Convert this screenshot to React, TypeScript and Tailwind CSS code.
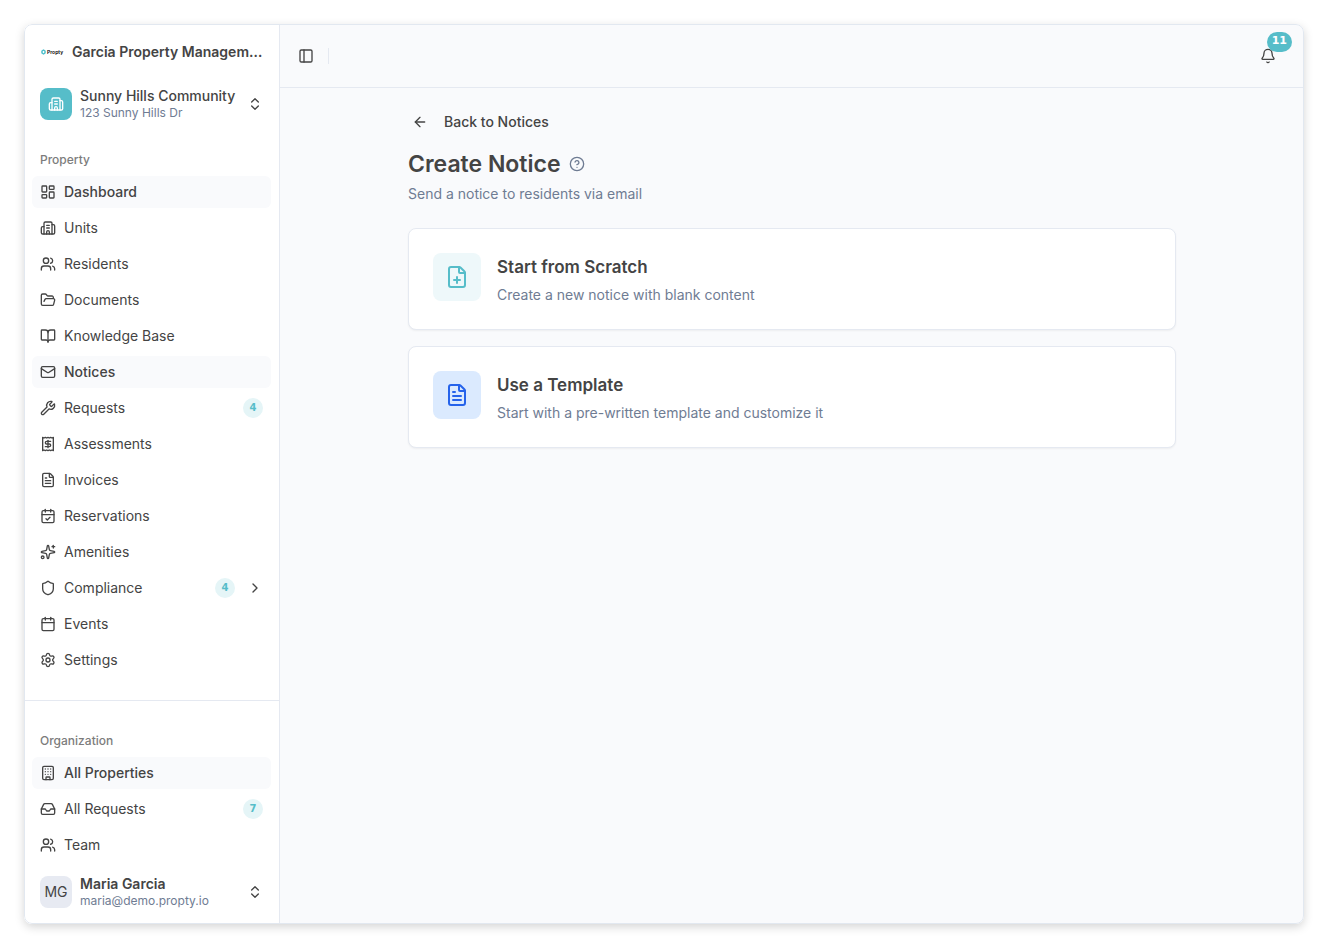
import type { ReactNode } from "react";
import {
  ArrowLeft,
  Bell,
  BookOpen,
  Building,
  Calendar,
  CalendarCheck,
  ChevronRight,
  ChevronsUpDown,
  CircleHelp,
  FilePlus,
  FileText,
  FolderOpen,
  Inbox,
  LayoutDashboard,
  Mail,
  PanelLeft,
  Settings,
  Shield,
  Sparkles,
  Users,
  Wrench,
} from "lucide-react";
import type { LucideIcon } from "lucide-react";
import clsx from "clsx";

type NavItem = {
  label: string;
  icon: LucideIcon | typeof UnitsIcon;
  active?: boolean;
  badge?: number;
  expandable?: boolean;
};

const UnitsIcon = ({ className }: { className?: string }) => (
  <svg
    className={className}
    viewBox="0 0 24 24"
    fill="none"
    stroke="currentColor"
    strokeWidth="2"
    strokeLinecap="round"
    strokeLinejoin="round"
  >
    <path d="M10 12h4" />
    <path d="M10 8h4" />
    <path d="M14 21v-3a2 2 0 0 0-4 0v3" />
    <path d="M6 10H4a2 2 0 0 0-2 2v7a2 2 0 0 0 2 2h16a2 2 0 0 0 2-2V9a2 2 0 0 0-2-2h-2" />
    <path d="M6 21V5a2 2 0 0 1 2-2h8a2 2 0 0 1 2 2v16" />
  </svg>
);

const AssessmentsIcon = ({ className }: { className?: string }) => (
  <svg
    className={className}
    viewBox="0 0 24 24"
    fill="none"
    stroke="currentColor"
    strokeWidth="2"
    strokeLinecap="round"
    strokeLinejoin="round"
  >
    <path d="M4 2v20l2-1 2 1 2-1 2 1 2-1 2 1 2-1 2 1V2l-2 1-2-1-2 1-2-1-2 1-2-1-2 1Z" />
    <path d="M16 8h-6a2 2 0 1 0 0 4h4a2 2 0 1 1 0 4H8" />
    <path d="M12 17.5v-11" />
  </svg>
);

const propertyItems: NavItem[] = [
  { label: "Dashboard", icon: LayoutDashboard, active: true },
  { label: "Units", icon: UnitsIcon },
  { label: "Residents", icon: Users },
  { label: "Documents", icon: FolderOpen },
  { label: "Knowledge Base", icon: BookOpen },
  { label: "Notices", icon: Mail, active: true },
  { label: "Requests", icon: Wrench, badge: 4 },
  { label: "Assessments", icon: AssessmentsIcon },
  { label: "Invoices", icon: FileText },
  { label: "Reservations", icon: CalendarCheck },
  { label: "Amenities", icon: Sparkles },
  { label: "Compliance", icon: Shield, badge: 4, expandable: true },
  { label: "Events", icon: Calendar },
  { label: "Settings", icon: Settings },
];

const organizationItems: NavItem[] = [
  { label: "All Properties", icon: Building, active: true },
  { label: "All Requests", icon: Inbox, badge: 7 },
  { label: "Team", icon: Users },
];

const NavGroup = ({ title, items }: { title: string; items: NavItem[] }) => (
  <nav className="px-2 pt-2" aria-label={title}>
    <h2 className="flex h-8 items-center px-2 text-xs font-medium text-[#7c7c7c]">
      {title}
    </h2>
    <ul className="flex flex-col gap-1">
      {items.map(({ label, icon: Icon, active, badge, expandable }) => (
        <li key={label}>
          <a
            href="#"
            className={clsx(
              "flex h-8 items-center gap-2 rounded-md px-2 text-sm hover:bg-[#f9fafc]",
              active && "bg-[#f9fafc] font-medium"
            )}
          >
            <Icon className="size-4 shrink-0" />
            <span className="flex-1 truncate">{label}</span>
            {badge && (
              <span className="flex size-5 items-center justify-center rounded-full bg-[#e5f5f7] font-['DejaVu_Sans',sans-serif] text-[10px] font-bold text-[#56bdc9]">
                {badge}
              </span>
            )}
            {expandable && <ChevronRight className="ml-1 size-4 shrink-0" />}
          </a>
        </li>
      ))}
    </ul>
  </nav>
);

const Sidebar = () => (
  <aside className="flex w-64 shrink-0 flex-col border-r border-[#e5e9f1] bg-white">
    <div className="flex flex-col gap-2 p-2">
      <a href="#" className="flex h-10 items-center gap-2 px-2">
        <span className="flex w-6 shrink-0 items-center gap-px pl-px text-[5px] leading-none font-semibold text-black">
          <svg className="h-[6px] w-[5px] shrink-0" viewBox="0 0 10 12" fill="none">
            <path
              d="M5 2 8 4v4L5 10 2 8V4Z"
              stroke="#4fc0cc"
              strokeWidth="3"
              strokeLinejoin="round"
            />
          </svg>
          Propty
        </span>
        <span className="truncate text-sm font-semibold">
          Garcia Property Management
        </span>
      </a>
      <button className="flex h-12 items-center gap-2 rounded-md px-2 text-left">
        <span className="flex size-8 shrink-0 items-center justify-center rounded-lg bg-[#56bdc9] text-white">
          <UnitsIcon className="size-4" />
        </span>
        <span className="min-w-0 flex-1">
          <span className="block truncate text-sm leading-[18px] font-medium">
            Sunny Hills Community
          </span>
          <span className="block truncate text-xs text-[#6f7c93]">
            123 Sunny Hills Dr
          </span>
        </span>
        <ChevronsUpDown className="size-4 shrink-0" />
      </button>
    </div>

    <NavGroup title="Property" items={propertyItems} />
    <hr className="mt-6 mb-4 border-[#e5e9f1]" />
    <NavGroup title="Organization" items={organizationItems} />

    <div className="mt-auto px-2 pb-2">
      <button className="flex h-12 w-full items-center gap-2 rounded-md px-2 text-left">
        <span className="flex size-8 shrink-0 items-center justify-center rounded-lg bg-[#e7eaf2] text-sm">
          MG
        </span>
        <span className="min-w-0 flex-1">
          <span className="block truncate text-sm leading-[18px] font-semibold">
            Maria Garcia
          </span>
          <span className="block truncate text-xs text-[#6f7c93]">
            maria@demo.propty.io
          </span>
        </span>
        <ChevronsUpDown className="size-4 shrink-0" />
      </button>
    </div>
  </aside>
);

const Header = () => (
  <header className="flex h-16 items-center border-b border-[#e5e9f1] px-3">
    <button
      aria-label="Toggle sidebar"
      className="flex size-7 items-center justify-center rounded-md"
    >
      <PanelLeft className="size-4" />
    </button>
    <span className="ml-2 h-4 w-px bg-[#e5e9f1]" />
    <button
      aria-label="Notifications"
      className="relative mr-1 ml-auto flex size-10 items-center justify-center rounded-md"
    >
      <Bell className="size-4" />
      <span className="absolute -top-1 -right-1 flex h-5 items-center rounded-full bg-[#56bdc9] px-[5px] font-['DejaVu_Sans',sans-serif] text-[11px] font-bold text-white">
        11
      </span>
    </button>
  </header>
);

type OptionCardProps = {
  title: string;
  description: string;
  iconClassName: string;
  icon: ReactNode;
};

const OptionCard = ({ title, description, iconClassName, icon }: OptionCardProps) => (
  <button className="flex items-start gap-4 rounded-lg border border-[#e5e9f1] bg-white p-6 text-left shadow-xs">
    <span
      className={clsx(
        "flex size-12 shrink-0 items-center justify-center rounded-lg",
        iconClassName
      )}
    >
      {icon}
    </span>
    <span className="flex flex-col gap-1">
      <span className="text-[17px] leading-7 font-semibold">{title}</span>
      <span className="text-sm text-[#6f7c93]">{description}</span>
    </span>
  </button>
);

const App = () => {
  return (
    <div className="flex min-h-screen bg-white p-6 font-['Inter',sans-serif] text-[#444444]">
      <div className="relative flex flex-1 overflow-hidden rounded-lg bg-[#f9fafc] shadow-[0_3px_10px_rgba(0,0,0,0.17)] after:pointer-events-none after:absolute after:inset-0 after:rounded-lg after:border after:border-[#e2e8f0]">
        <Sidebar />
        <div className="flex min-w-0 flex-1 flex-col">
          <Header />
          <main className="mx-auto w-full max-w-3xl py-4">
            <a href="#" className="flex h-9 w-fit items-center gap-4 px-1 text-sm font-medium">
              <ArrowLeft className="size-4" />
              Back to Notices
            </a>
            <div className="mt-2 flex items-center gap-2">
              <h1 className="text-[23px] leading-8 font-semibold">Create Notice</h1>
              <button aria-label="Help" className="text-[#6f7c93]">
                <CircleHelp className="size-4" />
              </button>
            </div>
            <p className="mt-1 text-sm text-[#6f7c93]">
              Send a notice to residents via email
            </p>
            <div className="mt-6 flex flex-col gap-4">
              <OptionCard
                title="Start from Scratch"
                description="Create a new notice with blank content"
                iconClassName="bg-[#eef8fa] text-[#56bdc9]"
                icon={<FilePlus className="size-6" />}
              />
              <OptionCard
                title="Use a Template"
                description="Start with a pre-written template and customize it"
                iconClassName="bg-blue-100 text-[#2563eb]"
                icon={<FileText className="size-6" />}
              />
            </div>
          </main>
        </div>
      </div>
    </div>
  );
};

export default App;
